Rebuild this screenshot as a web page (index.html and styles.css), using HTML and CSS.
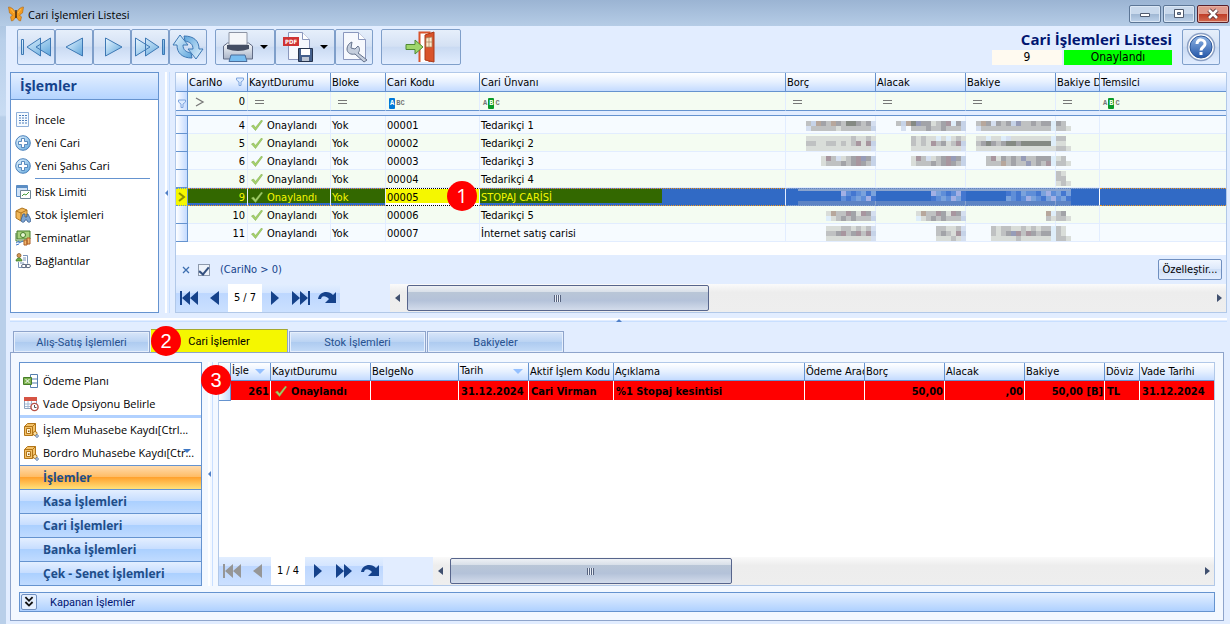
FILE: index.html
```
<!DOCTYPE html>
<html lang="tr">
<head>
  <meta charset="UTF-8" />
  <title>Cari İşlemleri Listesi</title>
  <meta name="viewport" content="width=device-width, initial-scale=1.0" />
  <link rel="stylesheet" href="styles.css">
</head>
<body>
  <svg class="defs" aria-hidden="true">
    <defs>
      <linearGradient id="blue" x1="0" y1="0" x2="1" y2="1">
        <stop offset="0" stop-color="#eaf7ff" /><stop offset="1" stop-color="#5da5dc" />
      </linearGradient>
      <linearGradient id="steel" x1="0" y1="0" x2="0" y2="1">
        <stop offset="0" stop-color="#f8fafc" /><stop offset="1" stop-color="#a9b4c8" />
      </linearGradient>
      <linearGradient id="help" x1="0" y1="0" x2="0" y2="1">
        <stop offset="0" stop-color="#8fb4e4" /><stop offset="1" stop-color="#2456a8" />
      </linearGradient>
    </defs>
    <symbol id="check" viewBox="0 0 12 12"><path d="M.5 7l2-1 2 2.500 6-7.500 1 1-7 9.500z" fill="#a5d46a" stroke="#84ad52" stroke-width=".6" /></symbol>
    <symbol id="funnel" viewBox="0 0 8 9"><path d="M.5 1h7v2l-2.500 2v3.500h-2v-3.500l-2.500-2z" fill="#dcebff" stroke="#7fa5dd" /></symbol>
    <symbol id="plus" viewBox="0 0 16 16"><circle cx="8" cy="8" r="7.300" fill="url(#blue)" stroke="#4a80bb" /><path d="M6.500 3.500h3v3h3v3h-3v3h-3v-3h-3v-3h3z" fill="#fff" stroke="#3c73b0" stroke-width=".8" /></symbol>
    <symbol id="books" viewBox="0 0 16 16"><path d="M1.500 4.500l3-3h8v9l-3 3h-8z" fill="#f3c168" stroke="#b27518" /><path d="M1.500 4.500h8v9M9.500 4.500l3-3" fill="none" stroke="#b27518" /><path d="M3.500 6.500h4v5h-4z" fill="#fff3d5" stroke="#b27518" /><path d="M5 8.500h1.500v1.500H5z" fill="#8a5910" /><circle cx="12" cy="11.500" r="2" fill="#fbe3aa" stroke="#b27518" /><circle cx="14" cy="14" r="1.300" fill="#fff" stroke="#5c7fae" /></symbol>
    <symbol id="nav-first" viewBox="0 0 20 16"><path d="M1 1h2v14H1zM11 1v14L3 8zM19 1v14l-8-7z" /></symbol>
    <symbol id="nav-prev" viewBox="0 0 20 16"><path d="M14 1v14L5 8z" /></symbol>
    <symbol id="nav-next" viewBox="0 0 20 16"><path d="M6 1v14l8-7z" /></symbol>
    <symbol id="nav-last" viewBox="0 0 20 16"><path d="M17 1h2v14h-2zM9 1v14l8-7zM1 1v14l8-7z" /></symbol>
    <symbol id="nav-fast" viewBox="0 0 20 16"><path d="M2 1v14l8-7zM10 1v14l8-7z" /></symbol>
    <symbol id="nav-redo" viewBox="0 0 20 16"><path d="M1 9c1-8 11-9 15-4l3-3v11H8l4-4C9 6 5 5 4 9z" /></symbol>
  </svg>

  <header class="title-bar">
    <svg class="logo" viewBox="0 0 16 16"><path d="M8 7C6 3 3 1 .5 1l1 6 3 2-2 2 1 4c2 0 4-3 4.500-5 .5 2 2.500 5 4.500 5l1-4-2-2 3-2 1-6C13 1 10 3 8 7z" fill="#f39a1e" stroke="#b0640e" stroke-width=".6" /><path d="M8 4v8" stroke="#3b2008" stroke-width="1.400" /><path d="M3 3l3 4M13 3l-3 4" stroke="#ffc04a" /></svg>
    <span>Cari İşlemleri Listesi</span>
    <div class="win-buttons">
      <button aria-label="Simge"><svg viewBox="0 0 14 12"><path d="M2.500 5.500h9v3h-9z" fill="#fff" stroke="#4f5a6e" /></svg></button>
      <button aria-label="Ekran"><svg viewBox="0 0 14 12"><path d="M2.500 1.500h9v8h-9z" fill="#fff" stroke="#4f5a6e" /><path d="M5.500 4.500h3v2h-3z" fill="#8ea7c6" stroke="#4f5a6e" /></svg></button>
      <button class="close" aria-label="Kapat"><svg viewBox="0 0 14 12"><path d="M3 2l8 8M11 2l-8 8" stroke="#553035" stroke-width="4.500" /><path d="M3 2l8 8M11 2l-8 8" stroke="#fff" stroke-width="2.600" /></svg></button>
    </div>
  </header>

  <main class="window">
    <div class="toolbar">
      <div class="tool-group">
        <button aria-label="İlk"><svg viewBox="0 0 32 24"><path d="M1.500 4.500h2v15h-2zM20.500 3v18L7 12zM30.500 3v18L16 12z" fill="url(#blue)" stroke="#3d78b4" /></svg></button>
        <button aria-label="Önceki"><svg viewBox="0 0 32 24"><path d="M24.500 3v18L8 12z" fill="url(#blue)" stroke="#3d78b4" /></svg></button>
        <button aria-label="Sonraki"><svg viewBox="0 0 32 24"><path d="M9.500 3v18L26 12z" fill="url(#blue)" stroke="#3d78b4" /></svg></button>
        <button aria-label="Son"><svg viewBox="0 0 32 24"><path d="M28.500 4.500h2v15h-2zM11.500 3v18L25 12zM1.500 3v18L16 12z" fill="url(#blue)" stroke="#3d78b4" /></svg></button>
        <button aria-label="Yenile"><svg viewBox="0 0 32 28"><g fill="url(#blue)" stroke="#3d78b4"><path d="M5 12H1L8 2l8 10h-5c0 5 3 7 8 8l1 5C10 25 5 20 5 12z" /><path d="M5 12H1L8 2l8 10h-5c0 5 3 7 8 8l1 5C10 25 5 20 5 12z" transform="rotate(180 16 14)" /></g></svg></button>
      </div>
      <div class="tool-group">
        <button class="wide" aria-label="Yazdır"><svg viewBox="0 0 32 32"><path d="M1.500 15l4-3h21l4 3v13h-29z" fill="url(#steel)" stroke="#626c85" /><path d="M7 1.500h18V14H7z" fill="#f5f6f9" stroke="#8d94a4" /><path d="M5 14h22v4q-11 4-22 0z" fill="#454e63" /><path d="M9 24h14l2 6.500H7z" fill="#78bdf0" stroke="#4b6e9c" /></svg><i class="arrow"></i></button>
        <button class="wide" aria-label="PDF kaydet"><svg viewBox="0 0 32 32"><path d="M6.500 1.500h14l7 7v20h-21z" fill="#f6f8fd" stroke="#8a97bd" /><path d="M20.500 1.500v7h7" fill="#fff" stroke="#8a97bd" /><path d="M1 6h16v9H1z" fill="#cf3333" /><text x="3" y="13" font-size="6" font-weight="bold" fill="#fff">PDF</text><path d="M16.500 17.500h14v13h-14z" fill="#45608c" stroke="#26334d" /><path d="M19 18h9v6h-9z" fill="#fff" /><path d="M20 26h7v4h-7z" fill="#bdc6d4" /></svg><i class="arrow"></i></button>
        <button aria-label="Ayarlar"><svg viewBox="0 0 32 32"><path d="M5.500 1.500h15l7 7v20h-22z" fill="#f6f8fd" stroke="#8a97bd" /><path d="M20.500 1.500v7h7" fill="#fff" stroke="#8a97bd" /><path d="M14 11l-1 6 4 1 3-3c2 2 2 5 0 7l9 7-3 2-9-8c-4 1-8-1-8-5 0-3 2-6 5-7z" fill="#c5cedd" stroke="#65728c" /></svg></button>
      </div>
      <button class="exit" aria-label="Çıkış"><svg viewBox="0 0 32 32"><path d="M14.500 31V1.500h10V31" fill="#fff" stroke="#d9532b" stroke-width="2" /><path d="M20 4l9-3v30l-9-2z" fill="#d9532b" stroke="#a93a1b" /><path d="M21 7l6-1v10h-6z" fill="#ffe9c8" stroke="#a5805c" stroke-width=".7" /><path d="M24 6v10M21 11h6" stroke="#a5805c" stroke-width=".7" /><path d="M1 13.500h9V9l8 7-8 7v-4.500H1z" fill="#9fd66b" stroke="#4f8a34" /></svg></button>
      <div class="status">
        <h1>Cari İşlemleri Listesi</h1>
        <div class="status-row">
          <input type="text" value="9" aria-label="Cari no">
          <output>Onaylandı</output>
        </div>
      </div>
      <button class="help" aria-label="Yardım"><svg viewBox="0 0 32 32"><circle cx="16" cy="16" r="13.500" fill="#fff" stroke="#8ba0c4" stroke-width="1.500" /><circle cx="16" cy="16" r="11" fill="url(#help)" stroke="#2d5698" /><path d="M12 13c0-6 8.500-5 8 0 0 3-4 3-4 6.500M16 21v3" fill="none" stroke="#fff" stroke-width="3" /></svg></button>
    </div>

    <div class="upper">
      <nav class="side">
        <h2>İşlemler</h2>
        <ul>
          <li><a href="#"><svg viewBox="0 0 16 16"><path d="M1.500.5h12v14h-12z" fill="#f6fbff" stroke="#8fb0d9" /><path d="M4 3.500h2m1 0h2m1 0h2M4 6h2m1 0h2m1 0h2M4 8.500h2m1 0h2m1 0h2M4 11h2m1 0h2m1 0h2" stroke="#4d7dba" /></svg>İncele</a></li>
          <li><a href="#"><svg><use href="#plus" /></svg>Yeni Cari</a></li>
          <li><a href="#"><svg><use href="#plus" /></svg>Yeni Şahıs Cari</a></li>
          <li class="line"></li>
          <li><a href="#"><svg viewBox="0 0 16 16"><path d="M1.500 1.500h11v11h-11z" fill="#cfe2f7" stroke="#5b8dc4" /><path d="M2 2h10v2H2z" fill="#5b8dc4" /><path d="M5.500 6.500h10v8h-10z" fill="#fff" stroke="#6e8596" /><path d="M7 12l2-2 2 1 3-3" fill="none" stroke="#4a9c3f" /></svg>Risk Limiti</a></li>
          <li><a href="#"><svg viewBox="0 0 16 16"><path d="M1 4l6-3 5 2v7l-6 4-5-3z" fill="#f0b759" stroke="#ae741e" /><path d="M1 4l5 2 6-3M6 6v8" stroke="#ae741e" fill="none" /><path d="M8 7l-2 6c0 3 4 3 4 0h2c0 3 4 3 4 0l-3-6h-1v3h-2V7z" fill="#7ea5d1" stroke="#365d91" stroke-width=".8" /></svg>Stok İşlemleri</a></li>
          <li><a href="#"><svg viewBox="0 0 16 16"><path d="M2 1h13v8H2z" fill="#a8d17c" stroke="#437a28" /><circle cx="8" cy="5" r="2.500" fill="#e5f6d0" stroke="#437a28" /><path d="M1 3v8h10" fill="none" stroke="#437a28" /><path d="M1 13l3-2v2l4-2M1 15l3-1" stroke="#3e78c8" fill="none" /><path d="M9 10h3v5H9zM12 8h3v6h-3z" fill="#f1b56d" stroke="#ab5e27" /></svg>Teminatlar</a></li>
          <li><a href="#"><svg viewBox="0 0 16 16"><circle cx="4" cy="2.500" r="2" fill="#d79a58" stroke="#80501d" stroke-width=".7" /><path d="M1 8c0-4 6-4 6 0z" fill="#6cae45" stroke="#3a7223" stroke-width=".7" /><path d="M8 2.500h4.500v8M3.500 9v5.500H9" fill="none" stroke="#7892b8" /><path d="M8 5h3M8 7h3M5 10h4" stroke="#7892b8" /><ellipse cx="9" cy="13" rx="2.500" ry="1.700" fill="#fff" stroke="#55627a" /><ellipse cx="13" cy="13" rx="2.500" ry="1.700" fill="none" stroke="#55627a" /></svg>Bağlantılar</a></li>
        </ul>
      </nav>
      <div class="splitter"><i></i></div>
      <section class="grid-box">
        <table class="grid accounts">
          <colgroup><col class="c-mark"><col class="c-no"><col class="c-state"><col class="c-block"><col class="c-code"><col class="c-name"><col class="c-money"><col class="c-money"><col class="c-money"><col class="c-unit"><col></colgroup>
          <thead>
            <tr><th></th><th>CariNo<svg class="funnel"><use href="#funnel" /></svg></th><th>KayıtDurumu</th><th>Bloke</th><th>Cari Kodu</th><th>Cari Ünvanı</th><th>Borç</th><th>Alacak</th><th>Bakiye</th><th>Bakiye D</th><th>Temsilci</th></tr>
            <tr class="filter">
              <td class="mark"><svg class="funnel-mark"><use href="#funnel" /></svg></td>
              <td><div class="filter-no"><svg viewBox="0 0 10 10"><path d="M1 1l7 4-7 4" fill="none" stroke="#777" stroke-width="1.300" /></svg><input type="text" value="0" aria-label="CariNo filtre"></div></td>
              <td><i class="eq"></i></td><td><i class="eq"></i></td>
              <td><span class="abc starts"><b>A</b>BC</span></td><td><span class="abc has">A<b>B</b>C</span></td>
              <td><i class="eq"></i></td><td><i class="eq"></i></td><td><i class="eq"></i></td><td><i class="eq"></i></td><td><span class="abc has">A<b>B</b>C</span></td>
            </tr>
            <tr class="gap"><td colspan="11"></td></tr>
          </thead>
          <tbody>
            <tr><td class="mark"></td><td class="num">4</td><td><svg class="ok"><use href="#check" /></svg>Onaylandı</td><td>Yok</td><td>00001</td><td>Tedarikçi 1</td><td class="masked" data-at="20,5" data-blocks="13421421662129/91111101111113"></td><td class="masked" data-at="20,5" data-blocks="13465220128723/.9.11121121113"></td><td class="masked" data-at="10,5" data-blocks="1429212351121227/9111111111111117"></td><td class="masked" data-at="0,5" data-blocks="21/110"></td><td></td></tr>
            <tr><td class="mark"></td><td class="num">5</td><td><svg class="ok"><use href="#check" /></svg>Onaylandı</td><td>Yok</td><td>00002</td><td>Tedarikçi 2</td><td class="masked" data-at="20,2" data-blocks="00000000010010/11001101018083/00000000000009"></td><td class="masked" data-at="35,2" data-blocks="10100707010/10108120183/00000000009"></td><td class="masked" data-at="10,2" data-blocks="0070079000000007/1262126626666667/0000000000000000"></td><td class="masked" data-at="0,2" data-blocks="11/00/110"></td><td></td></tr>
            <tr><td class="mark"></td><td class="num">6</td><td><svg class="ok"><use href="#check" /></svg>Onaylandı</td><td>Yok</td><td>00003</td><td>Tedarikçi 3</td><td class="masked" data-at="35,4" data-blocks="08190128523/01112128213"></td><td class="masked" data-at="35,4" data-blocks="08190128523/01112128213"></td><td class="masked" data-at="20,4" data-blocks="18021215112227/11141211512187"></td><td class="masked" data-at="0,4" data-blocks="01/110"></td><td></td></tr>
            <tr><td class="mark"></td><td class="num">8</td><td><svg class="ok"><use href="#check" /></svg>Onaylandı</td><td>Yok</td><td>00004</td><td>Tedarikçi 4</td><td></td><td></td><td></td><td class="masked" data-at="0,1" data-blocks="10/11/010"></td><td></td></tr>
            <tr class="selected"><td class="mark"><svg viewBox="0 0 8 10"><path d="M1 1l5 4-5 4" fill="none" stroke="#8a9200" stroke-width="2" /></svg></td><td class="num">9</td><td><svg class="ok"><use href="#check" /></svg>Onaylandı</td><td>Yok</td><td class="editing">00005<span class="badge badge-one">1</span></td><td class="marked">STOPAJ CARİSİ</td><td class="masked band first" data-at="55,2" data-blocks="cdadbab/dadbdca"></td><td class="masked band" data-at="55,2" data-blocks="cbdadca/adbdcba"></td><td class="masked band" data-at="40,2" data-blocks="adabddabcd/bdadcbdabc"></td><td class="masked band last" data-at="0,2" data-blocks="bab/dba"></td><td></td></tr>
            <tr><td class="mark"></td><td class="num">10</td><td><svg class="ok"><use href="#check" /></svg>Onaylandı</td><td>Yok</td><td>00006</td><td>Tedarikçi 5</td><td class="masked" data-at="40,5" data-blocks="0411820829/7012121113"></td><td class="masked" data-at="40,5" data-blocks="0411820829/7012121113"></td><td class="masked" data-at="80,5" data-blocks="47/10"></td><td class="masked" data-at="0,5" data-blocks="12/110"></td><td></td></tr>
            <tr><td class="mark"></td><td class="num">11</td><td><svg class="ok"><use href="#check" /></svg>Onaylandı</td><td>Yok</td><td>00007</td><td>İnternet satış carisi</td><td class="masked" data-at="40,2" data-blocks="0001101019/1128128183/0000000009"></td><td class="masked" data-at="60,2" data-blocks="110019/121083/000109"></td><td class="masked" data-at="25,2" data-blocks="1011001010117/1012581821227/0000010000007"></td><td class="masked" data-at="0,2" data-blocks="10/10/110"></td><td></td></tr>
          </tbody>
        </table>
        <div class="filter-panel">
          <button class="clear" aria-label="Filtreyi temizle"><svg viewBox="0 0 8 8"><path d="M1 1l6 6M7 1L1 7" stroke="#3e6fb0" stroke-width="1.300" /></svg></button>
          <label><input type="checkbox" checked>(CariNo &gt; 0)</label>
          <button class="customize">Özelleştir...</button>
        </div>
        <div class="pager">
          <div class="pager-buttons"><button aria-label="İlk"><svg><use href="#nav-first" /></svg></button><button aria-label="Önceki"><svg><use href="#nav-prev" /></svg></button></div>
          <span class="count">5 / 7</span>
          <div class="pager-buttons"><button aria-label="Sonraki"><svg><use href="#nav-next" /></svg></button><button aria-label="Son"><svg><use href="#nav-last" /></svg></button><button aria-label="Yinele"><svg><use href="#nav-redo" /></svg></button></div>
          <div class="scroll"><i class="left"></i><div class="thumb"><i></i></div><i class="right"></i></div>
        </div>
      </section>
    </div>

    <div class="splitter-h"><i></i></div>

    <div class="tabs" role="tablist">
      <button role="tab">Alış-Satış İşlemleri</button>
      <button role="tab" class="active" aria-selected="true">Cari İşlemler<span class="badge badge-two">2</span></button>
      <button role="tab">Stok İşlemleri</button>
      <button role="tab">Bakiyeler</button>
    </div>

    <div class="tab-page">
      <div class="lower">
        <nav class="side-lower">
          <ul>
            <li><a href="#"><svg viewBox="0 0 16 16"><path d="M7.500 1.500h7v13h-7zM7.500 6h7M7.500 10h7" fill="#fff" stroke="#557fae" /><path d="M.5 4.500h8v7h-8z" fill="#7fb451" stroke="#477d29" /><path d="M2.500 6l4 4M6.500 6l-4 4" stroke="#fff" /></svg>Ödeme Planı</a></li>
            <li><a href="#"><svg viewBox="0 0 16 16"><path d="M1.500 1.500h12v11h-12z" fill="#fff" stroke="#8da3bf" /><path d="M1 1h13v4H1z" fill="#d65444" /><path d="M2 8h11M2 10.500h11M5 5v7M8.500 5v7" stroke="#a5bad5" /><circle cx="11.500" cy="11" r="3.600" fill="#fff" stroke="#b75045" stroke-width="1.400" /><path d="M11.500 9v2.500h2" fill="none" stroke="#555" /></svg>Vade Opsiyonu Belirle</a></li>
            <li class="thick"></li>
            <li><a href="#"><svg><use href="#books" /></svg>İşlem Muhasebe Kaydı[Ctrl...</a></li>
            <li><a href="#"><svg><use href="#books" /></svg>Bordro Muhasebe Kaydı[Ctr...</a><i class="more"></i></li>
          </ul>
          <div class="groups">
            <button class="current">İşlemler</button>
            <button>Kasa İşlemleri</button>
            <button>Cari İşlemleri</button>
            <button>Banka İşlemleri</button>
            <button>Çek - Senet İşlemleri</button>
          </div>
        </nav>
        <div class="splitter"><i></i></div>
        <section class="grid-box">
          <span class="badge badge-three">3</span>
          <table class="grid moves">
            <colgroup><col class="c-mark"><col class="m-no"><col class="m-state"><col class="m-doc"><col class="m-date"><col class="m-code"><col class="m-note"><col class="m-tool"><col class="m-money"><col class="m-money"><col class="m-money"><col class="m-unit"><col></colgroup>
            <thead>
              <tr><th></th><th>İşle<i class="sort"></i></th><th>KayıtDurumu</th><th>BelgeNo</th><th>Tarih<i class="sort"></i></th><th>Aktif İşlem Kodu</th><th>Açıklama</th><th>Ödeme Arac</th><th>Borç</th><th>Alacak</th><th>Bakiye</th><th>Döviz</th><th>Vade Tarihi</th></tr>
            </thead>
            <tbody>
              <tr><td class="mark"></td><td class="num">261</td><td><svg class="ok"><use href="#check" /></svg>Onaylandı</td><td></td><td>31.12.2024</td><td>Cari Virman</td><td>%1 Stopaj kesintisi</td><td></td><td class="num">50,00</td><td class="num">,00</td><td class="num">50,00 [B]</td><td>TL</td><td>31.12.2024</td></tr>
            </tbody>
          </table>
          <div class="pager">
            <div class="pager-buttons"><button aria-label="İlk" disabled><svg><use href="#nav-first" /></svg></button><button aria-label="Önceki" disabled><svg><use href="#nav-prev" /></svg></button></div>
            <span class="count">1 / 4</span>
            <div class="pager-buttons"><button aria-label="Sonraki"><svg><use href="#nav-next" /></svg></button><button aria-label="Son"><svg><use href="#nav-fast" /></svg></button><button aria-label="Yinele"><svg><use href="#nav-redo" /></svg></button></div>
            <div class="scroll"><i class="left"></i><div class="thumb"><i></i></div><i class="right"></i></div>
          </div>
        </section>
      </div>
      <div class="closed-bar">
        <button aria-label="Aç"><svg viewBox="0 0 10 10"><path d="M2 1l3 3 3-3M2 5l3 3 3-3" fill="none" stroke="#111" stroke-width="1.500" /></svg></button>
        <span>Kapanan İşlemler</span>
      </div>
    </div>
  </main>
  <script src="masked.js"></script>
</body>
</html>
```
FILE: styles.css
```
* {
  box-sizing: border-box;
}

body {
  margin: 0;
  min-height: 100vh;
  display: flex;
  flex-direction: column;
  background: linear-gradient(#9db7d5, #b8cfe9 40px, #c9dcf3 115px, #b9cfe9 117px);
  font-family: "DejaVu Sans Condensed", "Noto Sans", sans-serif;
  font-size: 11px;
  color: #000;
}

button, input {
  font: inherit;
  color: inherit;
  padding: 0;
}

ul {
  list-style: none;
  margin: 0;
  padding: 0;
}

a {
  color: inherit;
  text-decoration: none;
}

.defs {
  position: absolute;
  width: 0;
  height: 0;
}

/* title bar */
.title-bar {
  height: 26px;
  display: flex;
  align-items: center;
  gap: 4px;
  padding: 2px 1px 0 8px;
  background: linear-gradient(#9bb4d3, #b5cce6);
  font-family: "Open Sans", sans-serif;
  font-size: 11px;
}

.logo {
  width: 16px;
  height: 16px;
}

.win-buttons {
  display: flex;
  gap: 2px;
  margin-left: auto;
}

.win-buttons button {
  width: 32px;
  height: 18px;
  display: flex;
  align-items: center;
  justify-content: center;
  border: 1px solid #5c7696;
  border-radius: 2px;
  background: linear-gradient(#c9d9ec 48%, #9fb7d3 50%, #bed2ea);
  box-shadow: inset 0 0 0 1px #dbe7f5;
}

.win-buttons .close {
  border-color: #59202b;
  background: linear-gradient(#df9a8c 48%, #bf3c27 50%, #d2694f);
  box-shadow: inset 0 0 0 1px #e8b0a2;
}

.win-buttons svg {
  width: 14px;
  height: 12px;
}

.window {
  flex: 1;
  display: flex;
  flex-direction: column;
  margin-left: 6px;
  padding: 3px 3px 3px 4px;
  background: #e2edff;
}

/* toolbar */
.toolbar {
  display: flex;
  align-items: flex-start;
  gap: 8px;
  padding: 0 7px;
  height: 43px;
}

.tool-group {
  display: flex;
}

.toolbar button {
  width: 38px;
  height: 36px;
  display: flex;
  align-items: center;
  justify-content: center;
  gap: 6px;
  border: 1px solid #7f9fca;
  border-radius: 2px;
  background: linear-gradient(#e6effb, #d4e1f4 48%, #c9daf2 50%, #e2edff);
}

.toolbar button svg {
  width: 32px;
  height: 32px;
}

.toolbar .wide {
  width: 60px;
}

.toolbar .exit {
  width: 80px;
}

.arrow {
  border: 4px solid transparent;
  border-top-color: #000;
  border-bottom: 0;
}

.status {
  margin-left: auto;
}

.status h1 {
  margin: 0;
  font: bold 15px/21px "Open Sans", sans-serif;
  color: #001571;
  text-align: right;
}

.status-row {
  display: flex;
  gap: 2px;
}

.status input, .status output {
  width: 70px;
  height: 15px;
  border: 0;
  background: #fffaf0;
  font-size: 12px;
  line-height: 15px;
  text-align: center;
}

.status output {
  width: 108px;
  background: #0f0;
}

.toolbar .help {
  margin-left: 2px;
}

/* upper part */
.upper {
  display: flex;
}

.side {
  width: 149px;
  border: 1px solid #6593cf;
  background: #fff;
  font: 11px "Open Sans", sans-serif;
}

.side h2 {
  margin: 0;
  height: 27px;
  padding-left: 9px;
  border-bottom: 1px solid #6593cf;
  background: linear-gradient(#e4efff, #b4d4ff);
  font-size: 14px;
  line-height: 26px;
  color: #15428b;
}

.side ul {
  padding: 8px 4px;
}

.side a, .side-lower a {
  display: flex;
  align-items: center;
  gap: 4px;
  height: 23px;
  white-space: nowrap;
}

.side svg, .side-lower svg {
  flex: none;
  width: 16px;
  height: 16px;
}

.side .line {
  height: 2px;
  margin: 1px 4px 0 20px;
  border-top: 1px solid #6593cf;
}

.splitter {
  width: 16px;
  display: flex;
  align-items: center;
  padding-left: 6px;
  background: linear-gradient(90deg, transparent 6px, #fff 6px 8px, transparent 8px 10px, #c9dfff 10px 11px, transparent 11px);
}

.splitter i {
  border: 3px solid transparent;
  border-right-color: #5080c8;
  border-left: 0;
}

.grid-box {
  flex: 1;
  min-width: 0;
  display: flex;
  flex-direction: column;
  position: relative;
  border: 1px solid #b1c8e8;
  background: #fff;
}

/* grids */
.grid {
  width: 100%;
  table-layout: fixed;
  border-spacing: 0;
}

.grid th {
  height: 19px;
  padding: 0 2px 0 1px;
  border-right: 1px solid #6593cf;
  border-bottom: 1px solid #6593cf;
  background: linear-gradient(#fff, #e6f0ff 50%, #c4dbff);
  font-weight: normal;
  text-align: left;
  white-space: nowrap;
  overflow: hidden;
}

.grid td {
  height: 18px;
  padding: 1px 2px 0 1px;
  border-right: 1px solid #e2edff;
  border-bottom: 1px solid #e2edff;
  white-space: nowrap;
}

.grid th:last-child, .grid td:last-child {
  border-right: 0;
}

.grid .mark {
  padding: 0;
  border-color: #6593cf;
  background: linear-gradient(90deg, #fff, #c4dbff);
}

.grid .num {
  text-align: right;
}

.c-mark { width: 12px; }
.c-no { width: 60px; }
.c-state { width: 83px; }
.c-block { width: 55px; }
.c-code { width: 94px; }
.c-name { width: 306px; }
.c-money { width: 90px; }
.c-unit { width: 44px; }

.accounts {
  margin-bottom: 13px;
}

.accounts tbody tr {
  background: #f6fbff;
}

.accounts tbody tr:nth-child(even), .accounts .filter {
  background: #f4fcf2;
}

.grid .funnel {
  float: right;
  width: 8px;
  height: 9px;
  margin: 1px;
}

.funnel-mark {
  display: block;
  width: 8px;
  height: 9px;
  margin: 5px auto 0;
}

.filter td {
  height: 19px;
  border-bottom-color: #6593cf;
}

.filter-no {
  display: flex;
  align-items: center;
  padding-left: 6px;
}

.filter-no svg {
  flex: none;
  width: 10px;
  height: 10px;
}

.filter-no input {
  width: 100%;
  min-width: 0;
  border: 0;
  background: none;
  text-align: right;
}

.eq {
  display: block;
  width: 9px;
  height: 4px;
  margin-left: 6px;
  border: solid #777;
  border-width: 1px 0;
}

.abc {
  display: inline-flex;
  align-items: center;
  gap: 1px;
  margin-left: 2px;
  font: bold 7px/11px "Liberation Mono", monospace;
  color: #777;
}

.abc b {
  padding: 0 1px;
  border-radius: 1px;
  background: #0078d7;
  color: #fff;
}

.abc.has b {
  background: #0a9b28;
}

.grid .gap td {
  height: 5px;
  padding: 0;
  border-bottom-color: #6593cf;
  background: #e2edff;
}

.ok {
  width: 12px;
  height: 12px;
  margin: 0 4px 0 2px;
  vertical-align: -2px;
}

.accounts .masked {
  padding: 0;
  vertical-align: top;
}

.masked svg {
  display: block;
  width: 90px;
  height: 16px;
  overflow: visible;
}

/* selected row with yellow marker over it */
.accounts .selected td {
  border-top: 1px dotted #f39a1e;
  border-bottom: 1px dotted #f39a1e;
  padding-top: 0;
  background: linear-gradient(#336800, #336800) no-repeat 0 0 / 100% 14px #316ac5;
  color: #f5f700;
}

.accounts .selected .mark {
  border-color: #6593cf;
  background: #f5f700;
}

.selected .mark svg {
  display: block;
  width: 8px;
  height: 10px;
  margin: auto;
}

.accounts .selected .editing {
  position: relative;
  border-top-color: #000;
  border-bottom-color: #000;
  background: linear-gradient(#f5f700, #f5f700) no-repeat 0 0 / 100% 14px #fff;
  color: #000;
}

.accounts .selected .marked {
  background-size: 182px 14px;
}

.accounts .selected .marked ~ td {
  background: #316ac5;
}

.accounts .selected td.band {
  border-color: #8aa4ce;
  border-bottom-color: #5d84c4;
  background: linear-gradient(#8aa4ce 2px, #316ac5 2px 12px, #5d84c4 12px);
}

.accounts .selected td.first {
  background: linear-gradient(#316ac5, #316ac5) no-repeat 0 0 / 12px 100%, linear-gradient(#8aa4ce 2px, #316ac5 2px 12px, #5d84c4 12px);
}

.accounts .selected td.last {
  border-right-color: #fff;
  background: linear-gradient(#316ac5, #316ac5) no-repeat 15px 0 / 100% 100%, linear-gradient(#8aa4ce 2px, #316ac5 2px 12px, #5d84c4 12px);
}

.badge {
  position: absolute;
  z-index: 2;
  width: 30px;
  height: 30px;
  border-radius: 50%;
  background: #f00;
  color: #fff;
  font: 20px/30px "Liberation Sans", sans-serif;
  text-align: center;
}

.badge-one {
  top: -8px;
  right: 2px;
  font-family: "Open Sans", sans-serif;
}

.badge-two {
  top: -4px;
  left: 0;
}

.badge-three {
  top: 2px;
  left: -18px;
}

/* filter line and pager */
.filter-panel {
  display: flex;
  align-items: center;
  height: 29px;
  padding: 0 4px 0 6px;
  background: #e2edff;
  color: #15428b;
}

.filter-panel label {
  display: flex;
  align-items: center;
  gap: 10px;
}

.filter-panel .clear {
  width: 8px;
  height: 8px;
  margin-right: 8px;
  border: 0;
  background: none;
}

.clear svg {
  display: block;
}

.filter-panel input {
  appearance: none;
  width: 12px;
  height: 12px;
  margin: 0;
  display: flex;
  justify-content: center;
  border: 1px solid #8d99ac;
  background: #eef3fa;
}

.filter-panel input:checked::after {
  content: "";
  width: 4px;
  height: 8px;
  border: solid #34507f;
  border-width: 0 2px 2px 0;
  transform: rotate(40deg);
}

.filter-panel .customize {
  margin-left: auto;
  width: 64px;
  height: 21px;
  border: 1px solid #6f8fc0;
  border-radius: 2px;
  background: linear-gradient(#f2f7ff, #dce8fb 48%, #cfdff6 50%, #e2edff);
  color: #000;
}

.pager {
  display: flex;
  height: 28px;
  margin-top: auto;
  background: #e2edff;
}

.pager-buttons {
  display: flex;
  background: linear-gradient(#e2eeff, #d4e5ff 32%, #bdd7ff 34%, #cbe0ff);
}

.pager button {
  width: 26px;
  border: 0;
  background: none;
}

.pager button svg {
  display: block;
  width: 20px;
  height: 16px;
  margin: auto;
  fill: #15428b;
}

.pager button:disabled svg {
  fill: #969696;
}

.count {
  width: 34px;
  background: #fff;
  font-size: 11px;
  line-height: 28px;
  text-align: center;
}

.scroll {
  flex: 1;
  display: flex;
  align-items: center;
  justify-content: space-between;
  margin-left: 50px;
  padding: 0 4px 0 5px;
  background: linear-gradient(#fafafa, #ededed 30%, #eee);
}

.scroll .left, .scroll .right {
  border: 4px solid transparent;
}

.scroll .left {
  border-right: 5px solid #40506f;
  border-left: 0;
}

.scroll .right {
  border-left: 5px solid #40506f;
  border-right: 0;
}

.thumb {
  flex: none;
  width: 36.500%;
  height: 26px;
  display: flex;
  align-items: center;
  justify-content: center;
  margin: 0 auto 0 7px;
  border: 1px solid #57658c;
  border-radius: 2px;
  background: linear-gradient(#eef1f5, #d9e0e9 24%, #b9c6d7 27%, #b4c2d9 60%, #d3dceb);
}

.thumb i {
  width: 7px;
  height: 7px;
  background: repeating-linear-gradient(90deg, #56637f 0 1px, #e8edf5 1px 2px);
}

.splitter-h {
  height: 16px;
  display: flex;
  justify-content: center;
  align-items: flex-start;
  padding-top: 6px;
  background: linear-gradient(transparent 5px, #fff 5px 7px, transparent 7px 8px, #c9dfff 8px 9px, transparent 9px);
}

.splitter-h i {
  border: 3px solid transparent;
  border-bottom-color: #5080c8;
  border-top: 0;
}

/* tabs */
.tabs {
  display: flex;
  align-items: flex-end;
  gap: 1px;
  padding-left: 3px;
}

.tabs button {
  position: relative;
  width: 137px;
  height: 21px;
  border: 1px solid #8ea4cb;
  border-bottom: 0;
  box-shadow: inset 0 0 0 1px #e6effc;
  background: linear-gradient(#d9e6f9, #bad3f3 50%, #aecbf0 52%, #c4dbf8);
  font-family: Roboto, sans-serif;
  color: #26508f;
}

.tabs .active {
  height: 23px;
  border: 0;
  border-top: 1px solid #a7a92b;
  border-right: 1px solid #8ea4cb;
  box-shadow: none;
  background: #f5f700;
  color: #000;
}

.tab-page {
  flex: 1;
  display: flex;
  flex-direction: column;
  gap: 6px;
  margin-right: 3px;
  padding: 9px 8px 8px;
  border: 1px solid #8ea4cb;
  background: #f3f8ff;
}

.lower {
  flex: 1;
  display: flex;
}

.side-lower {
  width: 183px;
  display: flex;
  flex-direction: column;
  border: 1px solid #6593cf;
  background: #fff;
  font: 11px "Open Sans", sans-serif;
}

.side-lower ul {
  flex: 1;
  padding-top: 6px;
}

.side-lower li {
  position: relative;
}

.side-lower a {
  padding-left: 3px;
}

.more {
  position: absolute;
  top: 8px;
  right: 10px;
  border: 4px solid transparent;
  border-top-color: #3f78c4;
  border-bottom: 0;
}

.side-lower .thick {
  height: 3px;
  background: #b1d1ff;
}

.groups button {
  display: block;
  width: 100%;
  height: 24px;
  padding-left: 23px;
  border: 0;
  border-top: 1px solid #6593cf;
  background: linear-gradient(#e4efff, #c6ddff 48%, #abd0ff 50%, #c0dbff);
  font-size: 12px;
  font-weight: bold;
  text-align: left;
  color: #204d89;
}

.groups .current {
  background: linear-gradient(#ffdbad, #ffbd67 46%, #ffa22f 50%, #ffe17b);
}

.m-no { width: 40px; }
.m-state { width: 100px; }
.m-doc { width: 88px; }
.m-date { width: 70px; }
.m-code { width: 85px; }
.m-note { width: 191px; }
.m-tool { width: 60px; }
.m-money { width: 80px; }
.m-unit { width: 35px; }

.moves th {
  height: 18px;
}

.moves td {
  height: 20px;
  padding-left: 2px;
  border-color: #fff;
  background: #f00;
  font-weight: bold;
}

.moves .num {
  padding-right: 1px;
}

.sort {
  float: right;
  margin: 5px 3px;
  border: 5px solid transparent;
  border-top-color: #94c0ff;
  border-bottom: 0;
}

.closed-bar {
  display: flex;
  align-items: center;
  gap: 13px;
  height: 20px;
  padding-left: 1px;
  border: 1px solid #6593cf;
  background: linear-gradient(#e4efff, #afd1ff);
  font-family: Roboto, sans-serif;
  color: #001571;
}

.closed-bar button {
  width: 16px;
  height: 16px;
  border: 1px solid #6f8fc0;
  border-radius: 2px;
  background: #e4efff;
}

.closed-bar svg {
  display: block;
  width: 12px;
  height: 12px;
  margin: auto;
}
```
FILE: masked.js
```
// hidden amounts are drawn as 5px blocks
const shades = {
  0: '#d9ddd9', 1: '#bfc1c2', 2: '#a2a3a8', 3: '#c6d3e8', 4: '#b7a79c',
  5: '#969cb8', 6: '#858a84', 7: '#dfeefa', 8: '#a8969f', 9: '#d5dff0',
  a: '#4477d0', b: '#7aa2dc', c: '#a2b0e4', d: '#5f8ed8'
};

document.querySelectorAll('.masked').forEach(cell => {
  const [x, y] = cell.dataset.at.split(',').map(Number);
  let rects = '';
  cell.dataset.blocks.split('/').forEach((line, row) => {
    [...line].forEach((key, col) => {
      if (key === '.') return;
      rects += `<rect x="${x + col * 5}" y="${y + row * 5}" width="5" height="5" fill="${shades[key]}" />`;
    });
  });
  cell.innerHTML = `<svg viewBox="0 0 90 16" aria-hidden="true">${rects}</svg>`;
});
```
